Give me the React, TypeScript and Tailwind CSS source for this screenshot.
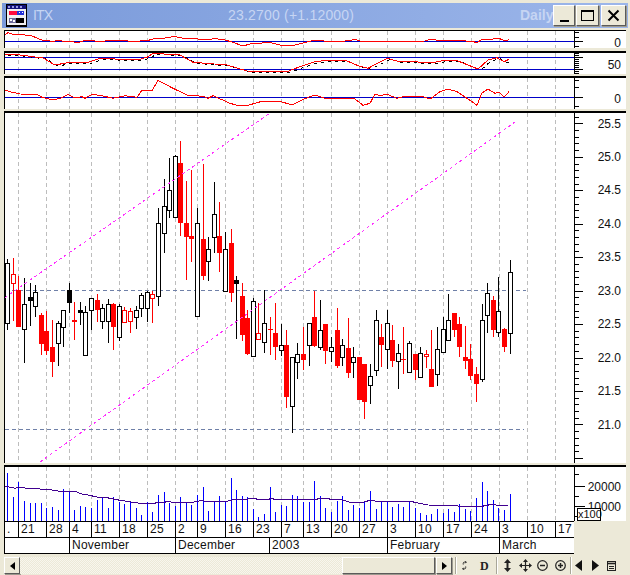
import React from "react";

type Kind = "h" | "f" | "r" | "o";
type Candle = [number, number, number, number, Kind];

const candles: Candle[] = [
  [259, 263, 323, 330, "h"], [258, 274, 283, 321, "o"], [276, 290, 327, 327, "r"], [278, 304, 329, 363, "h"],
  [283, 297, 301, 326, "f"], [285, 292, 306, 317, "h"], [313, 315, 344, 355, "r"], [311, 331, 351, 355, "r"],
  [320, 347, 362, 377, "r"], [321, 323, 343, 366, "h"], [310, 310, 327, 347, "h"], [283, 290, 303, 313, "f"],
  [302, 320, 322, 340, "r"], [302, 310, 313, 325, "f"], [306, 312, 355, 355, "h"], [298, 298, 310, 330, "h"],
  [294, 300, 310, 322, "r"], [304, 308, 321, 329, "h"], [299, 304, 321, 343, "h"], [303, 304, 327, 350, "r"],
  [304, 306, 337, 341, "h"], [307, 310, 322, 322, "o"], [308, 311, 321, 333, "o"], [306, 310, 317, 329, "h"],
  [293, 295, 308, 317, "h"], [291, 292, 308, 322, "h"], [291, 294, 298, 323, "o"], [208, 223, 296, 306, "h"],
  [179, 206, 233, 253, "h"], [158, 190, 210, 218, "h"], [155, 156, 217, 217, "h"], [141, 163, 223, 236, "r"],
  [181, 223, 237, 280, "r"], [170, 236, 239, 262, "r"], [208, 223, 316, 316, "h"], [164, 239, 276, 280, "r"],
  [237, 249, 261, 281, "h"], [182, 214, 237, 253, "h"], [202, 236, 253, 272, "r"], [232, 249, 291, 291, "h"],
  [229, 243, 293, 302, "r"], [276, 280, 284, 339, "f"], [283, 296, 335, 341, "r"], [310, 318, 354, 355, "r"],
  [298, 301, 356, 356, "h"], [303, 333, 339, 339, "o"], [290, 323, 342, 353, "h"], [317, 329, 330, 355, "r"],
  [303, 333, 347, 360, "r"], [324, 345, 350, 356, "h"], [330, 345, 397, 408, "r"], [357, 357, 406, 433, "h"],
  [343, 354, 362, 379, "h"], [327, 354, 360, 370, "r"], [323, 323, 345, 366, "h"], [291, 317, 346, 347, "r"],
  [300, 330, 347, 350, "h"], [324, 324, 351, 364, "r"], [337, 347, 351, 362, "h"], [308, 330, 366, 368, "r"],
  [339, 345, 357, 366, "h"], [318, 348, 373, 378, "r"], [347, 357, 362, 378, "h"], [357, 357, 400, 400, "r"],
  [364, 364, 402, 419, "r"], [364, 376, 385, 404, "h"], [310, 320, 370, 376, "h"], [324, 337, 345, 367, "r"],
  [310, 323, 349, 369, "h"], [325, 340, 361, 367, "r"], [344, 353, 361, 389, "h"], [327, 359, 360, 374, "r"],
  [341, 343, 372, 372, "h"], [354, 354, 370, 380, "r"], [347, 353, 377, 377, "h"], [350, 354, 356, 368, "o"],
  [330, 369, 387, 387, "r"], [327, 349, 374, 386, "h"], [317, 329, 352, 352, "h"], [294, 320, 340, 340, "h"],
  [313, 313, 330, 337, "r"], [317, 324, 347, 357, "r"], [326, 357, 361, 369, "r"], [344, 359, 376, 380, "r"],
  [367, 374, 384, 402, "r"], [304, 320, 379, 382, "h"], [283, 293, 315, 333, "h"], [296, 300, 330, 337, "r"],
  [277, 311, 332, 337, "h"], [328, 329, 347, 352, "r"], [260, 272, 333, 354, "h"],
];

const volumeTops = [
  36, 108, 62, 120, 126, 126, 126, 141, 138, 147, 84, 90, 147, 135, 138, 141, 117, 111, 141, 108,
  123, 129, 123, 141, 162, 123, 153, 102, 93, 126, 135, 108, 126, 132, 102, 78, 150, 123, 105, 120,
  51, 87, 105, 108, 144, 168, 159, 78, 153, 132, 135, 102, 105, 123, 123, 60, 105, 141, 153, 120,
  105, 147, 132, 141, 120, 90, 144, 123, 123, 138, 129, 138, 123, 141, 156, 162, 159, 144, 156, 144,
  153, 129, 144, 150, 111, 63, 90, 117, 141, 147, 99,
];

const px = (i: number) => Math.round(7.3 + 5.58 * i);
const gridXs = [18, 46, 69, 91, 119, 147, 175, 197, 225, 253, 281, 303, 331, 359, 387, 415, 443, 471, 499, 527, 555];

const toPts = (p: number[][]) => p.map((a) => a.join(",")).join(" ");

const osc1 = [[5,35],[8,32.5],[12,34],[22,34.5],[32,36],[38,38.5],[42,40],[48,40],[52,42],[58,40],[62,41],[70,41],[74,42],[80,42],[84,40.5],[92,40.5],[98,41.5],[105,41],[112,40],[122,40.5],[128,41],[140,41],[148,40.5],[156,38],[165,38],[174,36.5],[182,38],[195,38.5],[205,40],[215,38.5],[225,40],[232,42],[243,46],[250,44],[262,43],[270,42.5],[280,45],[295,45],[305,42.5],[315,40],[324,41],[335,42],[345,41],[355,39.5],[360,41],[378,41],[395,41.5],[425,41],[430,39.3],[440,40.5],[455,40.5],[472,41.3],[477,42.7],[482,39.3],[492,39.3],[498,38],[503,40],[507,41],[509,39.3]];
const stoch = [[5,54],[20,55],[43,58],[55,65],[70,62.3],[88,62.3],[100,58.3],[137,60],[147,57.3],[153,53.3],[180,55],[193,62.3],[227,65],[247,71],[287,71.7],[300,66.7],[315,61.7],[330,60],[345,60],[358,65.7],[368,68.3],[387,58.3],[397,61],[412,61.7],[432,62.7],[447,60],[458,61],[478,69],[488,60],[497,57.7],[504,61.7],[509,59.3]];
const osc3 = [[5,90],[10,91.7],[20,94],[37,94.3],[42,97.3],[53,100],[60,98.3],[68,94.7],[75,97.7],[82,96.7],[85,98.3],[92,94.3],[102,95.7],[113,98.3],[125,95.7],[137,97.3],[142,90],[152,90.7],[158,80.3],[173,88.3],[187,95],[203,96.3],[208,98.3],[213,95.7],[230,103.3],[237,105.3],[248,105.3],[262,101.3],[280,101.3],[292,105],[303,99.3],[315,95],[325,98.3],[340,98.3],[355,99],[363,105.3],[370,103.3],[375,94],[380,95.7],[387,94.3],[397,98.3],[403,96.7],[423,96.7],[430,99],[440,91.7],[448,89],[457,91.7],[472,101.7],[477,105.3],[482,93],[488,89],[495,93.3],[499,92.3],[504,97.3],[509,91.7]];
const ma = [[5,485.3],[15,487.3],[20,486.3],[27,487.3],[39,487.3],[40,488.3],[50,488.7],[62,490.7],[75,490],[80,492.7],[88,494],[97,496],[105,496.3],[120,499.3],[140,502.3],[155,502.3],[157,501.3],[165,501.3],[167,500.3],[173,501.3],[193,501.3],[200,499.7],[207,500.3],[227,500.3],[233,498.7],[248,498],[255,497.3],[258,498.7],[267,498.7],[272,497.3],[275,498.7],[315,498.7],[320,497.3],[328,497.3],[330,498.3],[340,498.3],[350,501.3],[363,501.3],[370,499.3],[380,500.7],[412,500.7],[428,504],[452,504.3],[460,505.3],[482,505.3],[492,503.3],[498,504.3],[509,504]];

function Chart({ top, height, children }: { top: number; height: number; children: React.ReactNode }) {
  return (
    <svg viewBox={`5 ${top} 569 ${height}`} className="block w-[569px] shrink-0" style={{ height }} shapeRendering="crispEdges">
      {gridXs.map((x) => (
        <line key={x} x1={x + 0.5} x2={x + 0.5} y1={top} y2={top + height} stroke="#bdbdbd" strokeDasharray="4 3" />
      ))}
      {children}
    </svg>
  );
}

function Axis({ top, height, majors, minors, labels, majorLen = 8 }: { top: number; height: number; majors: number[]; minors: number[]; labels: [string, number][]; majorLen?: number }) {
  return (
    <svg viewBox={`574 ${top} 52 ${height}`} className="block w-[52px] shrink-0" style={{ height }} fontFamily="'Liberation Sans', Arial, sans-serif" fontSize={12}>
      <line x1={574.5} x2={574.5} y1={top} y2={top + height} stroke="#000" shapeRendering="crispEdges" />
      {majors.map((y) => (
        <line key={y} x1={575} x2={575 + majorLen} y1={Math.round(y) + 0.5} y2={Math.round(y) + 0.5} stroke="#000" shapeRendering="crispEdges" />
      ))}
      {minors.map((y) => (
        <line key={y} x1={575} x2={579} y1={Math.round(y) + 0.5} y2={Math.round(y) + 0.5} stroke="#000" shapeRendering="crispEdges" />
      ))}
      {labels.map(([t, y]) => (
        <text key={t} x={621} y={y + 4.5} textAnchor="end" fill="#111">{t}</text>
      ))}
    </svg>
  );
}

function Hline({ y }: { y: number }) {
  return <line x1={5} x2={574} y1={y} y2={y} stroke="#0000c8" />;
}

function Btn({ children, className = "" }: { children: React.ReactNode; className?: string }) {
  return (
    <div className={`flex items-center justify-center bg-[#ece9d8] border border-t-white border-l-white border-r-[#5a5a5a] border-b-[#5a5a5a] shadow-[1px_1px_0_#9c9a8e] ${className}`}>
      {children}
    </div>
  );
}

function Panel({ className = "", children }: { className?: string; children: React.ReactNode }) {
  return <div className={`ml-1 w-[622px] flex bg-white border-l border-l-black border-t-2 border-t-black ${className}`}>{children}</div>;
}

const row1 = [
  [5, "."], [18, "21"], [46, "28"], [69, "4"], [91, "11"], [119, "18"], [147, "25"], [175, "2"], [197, "9"], [225, "16"], [253, "23"], [281, "7"], [303, "13"], [331, "20"], [359, "27"], [387, "3"], [415, "10"], [443, "17"], [471, "24"], [499, "3"], [527, "10"], [555, "17"],
] as [number, string][];
const row2 = [[5, ""], [69, "November"], [175, "December"], [269, "2003"], [387, "February"], [499, "March"]] as [number, string][];

function DateRow({ items }: { items: [number, string][] }) {
  return (
    <div className="flex h-4 border-b border-b-black">
      {items.map(([x, t], i) => {
        const next = i + 1 < items.length ? items[i + 1][0] : 574;
        return (
          <div key={x} className={`overflow-hidden whitespace-nowrap pl-[2px] text-[12px] leading-[15px] tracking-[0.25px] text-[#111] ${i > 0 ? "border-l border-l-black" : ""}`} style={{ width: next - x }}>
            {t}
          </div>
        );
      })}
    </div>
  );
}

function Sep() {
  return <div className="w-[2px] h-[17px] border-l border-l-[#a8a698] border-r border-r-white" />;
}

const WinIcon = () => (
  <svg viewBox="0 0 23 23" className="w-[23px] h-[23px] shrink-0" shapeRendering="crispEdges">
    <rect x="1" y="0" width="21" height="23" fill="#000" />
    <rect x="2" y="1" width="19" height="4" fill="#14147a" />
    <rect x="3" y="2" width="2" height="2" fill="#9a9ae0" />
    <rect x="7" y="2" width="2" height="2" fill="#9a9ae0" />
    <rect x="11" y="2" width="2" height="2" fill="#9a9ae0" />
    <rect x="15" y="2" width="2" height="2" fill="#9a9ae0" />
    <rect x="2" y="5" width="19" height="16" fill="#f0f0f0" />
    <rect x="4" y="7" width="8" height="4" fill="#ff0a3c" />
    <rect x="12" y="7" width="7" height="4" fill="#2030d8" />
    <rect x="14" y="8" width="1" height="1" fill="#fff" />
    <rect x="17" y="8" width="1" height="1" fill="#fff" />
    <rect x="4" y="14" width="7" height="5" fill="#6a6a9a" />
    <rect x="5" y="15" width="2" height="2" fill="#fff" />
    <rect x="8" y="16" width="2" height="2" fill="#fff" />
    <rect x="11" y="14" width="8" height="5" fill="#000" />
  </svg>
);

const ToolIcon = ({ children, w = 13 }: { children: React.ReactNode; w?: number }) => (
  <svg viewBox="0 0 13 13" className="shrink-0" style={{ width: w, height: 13 }} fill="none" stroke="#222" strokeWidth="1.2">
    {children}
  </svg>
);

export default function App() {
  const majors = Array.from({ length: 11 }, (_, k) => 123.4 + 33.45 * k);
  const minors = Array.from({ length: 51 }, (_, k) => 123.4 + 6.69 * k - 6.69).filter((y, k) => (k - 1) % 5 !== 0 && y > 113);
  const labels = ["25.5", "25.0", "24.5", "24.0", "23.5", "23.0", "22.5", "22.0", "21.5", "21.0"].map((t, k) => [t, 123 + 33.45 * k] as [string, number]);
  return (
    <div className="relative w-[630px] h-[575px] bg-[#ece9d8] overflow-hidden font-['Liberation_Sans',Arial,sans-serif] pt-[3px]">
      {/* title bar */}
      <div className="mx-[2px] h-[25px] flex items-center pl-[3px] pr-[2px] bg-gradient-to-r from-[#7a9ada] to-[#9cb6ea] text-[#c6d5f3]">
        <WinIcon />
        <span className="ml-[5px] w-[195px] text-[14px] tracking-[-0.8px]">ITX</span>
        <span className="w-[292px] text-[14px] tracking-[0.2px]">23.2700 (+1.12000)</span>
        <span className="text-[14px] font-semibold w-[33px]">Daily</span>
        <Btn className="w-[22px] h-[21px] ml-[0px]">
          <div className="w-[9px] h-[2px] bg-black mt-[10px]" />
        </Btn>
        <Btn className="w-[23px] h-[21px] ml-[1px]">
          <div className="w-[13px] h-[11px] border border-black border-t-2" />
        </Btn>
        <Btn className="w-[25px] h-[21px] ml-[2px]">
          <svg viewBox="0 0 13 13" className="w-[13px] h-[13px]"><path d="M1.5 1.5 L11.5 11.5 M11.5 1.5 L1.5 11.5" stroke="#000" strokeWidth="2" /></svg>
        </Btn>
      </div>

      {/* oscillator 1 */}
      <Panel className="mt-[2px] h-[18px] !border-t">
        <Chart top={31} height={17}>
          <Hline y={41.5} />
          <polyline points={toPts(osc1)} fill="none" stroke="#ff0000" />
        </Chart>
        <Axis top={31} height={17} majors={[41]} minors={[32, 37, 46]} labels={[["0", 42]]} />
      </Panel>

      {/* oscillator 2 */}
      <Panel className="mt-[3px] h-[23px]">
        <Chart top={53} height={21}>
          <Hline y={57.5} />
          <Hline y={69.5} />
          <polyline points={toPts(stoch.map(([x, y]) => [x + 3, y + 1]))} fill="none" stroke="#000" strokeDasharray="3 4" />
          <polyline points={toPts(stoch)} fill="none" stroke="#ff0000" />
        </Chart>
        <Axis top={53} height={21} majors={[57, 69]} minors={[53, 55, 59, 61, 63, 65, 67, 71, 73]} labels={[["50", 64.5]]} />
      </Panel>

      {/* oscillator 3 */}
      <Panel className="mt-[2px] h-[33px]">
        <Chart top={78} height={31}>
          <Hline y={97.5} />
          <polyline points={toPts(osc3)} fill="none" stroke="#ff0000" />
        </Chart>
        <Axis top={78} height={31} majors={[97]} minors={[80, 87, 106]} labels={[["0", 98]]} />
      </Panel>

      {/* price chart */}
      <Panel className="mt-[2px] h-[352px]">
        <Chart top={113} height={350}>
          <line x1={5} x2={526} y1={290.5} y2={290.5} stroke="#6f80a8" strokeDasharray="4 3" />
          <line x1={5} x2={524} y1={429.5} y2={429.5} stroke="#6f80a8" strokeDasharray="4 3" />
          {candles.map(([wt, bt, bb, wb, k], i) => {
            const x = px(i);
            const color = k === "r" || k === "o" ? "#ff0000" : "#000000";
            const hollow = k === "h" || k === "o";
            return (
              <g key={i}>
                <line x1={x + 0.5} x2={x + 0.5} y1={wt} y2={wb} stroke={color} />
                {hollow ? (
                  <rect x={x - 1.5} y={bt + 0.5} width={4} height={bb - bt} fill="#fff" stroke={color} />
                ) : (
                  <rect x={x - 2} y={bt} width={5} height={bb - bt} fill={color} />
                )}
              </g>
            );
          })}
          <line x1={5} y1={297.5} x2={270} y2={113} stroke="#ff30ff" strokeDasharray="3 3" />
          <line x1={40} y1={462} x2={515} y2={122} stroke="#ff30ff" strokeDasharray="3 3" />
        </Chart>
        <Axis top={113} height={350} majors={majors} minors={minors} labels={labels} />
      </Panel>

      {/* volume */}
      <Panel className="relative mt-[2px] h-[56px] !w-[622px]">
        <Chart top={466} height={54}>
          {volumeTops.map((t, i) => {
            const x = px(i) + 0.5;
            return <line key={i} x1={x} x2={x} y1={460 + t / 3} y2={520} stroke="#0000ff" />;
          })}
          <polyline points={toPts(ma)} fill="none" stroke="#400090" />
        </Chart>
        <Axis top={466} height={54} majors={[485, 505]} minors={[473, 495, 515]} majorLen={10} labels={[["20000", 485], ["10000", 505]]} />
        <div className="absolute left-[572px] bottom-0 w-[24px] h-[13px] bg-white border border-black text-[11px] leading-[11px] text-center text-[#111]">x100</div>
      </Panel>

      {/* dates */}
      <div className="ml-1 w-[570px] bg-white border-l border-l-black border-t border-t-black">
        <DateRow items={row1} />
        <DateRow items={row2} />
      </div>

      {/* toolbar */}
      <div className="ml-1 mt-[2px] h-[19px] flex items-center">
        <Btn className="w-[16px] h-[17px]">
          <svg viewBox="0 0 5 8" className="w-[5px] h-[8px]"><path d="M5 0 L0 4 L5 8Z" fill="#000" /></svg>
        </Btn>
        <div className="w-[322px] h-[17px] bg-[repeating-conic-gradient(#f8f6ee_0_25%,#ece9d8_0_50%)] bg-[length:2px_2px]" />
        <Btn className="w-[93px] h-[17px]"><span /></Btn>
        <Btn className="w-[16px] h-[17px] ml-[1px]">
          <svg viewBox="0 0 5 8" className="w-[5px] h-[8px]"><path d="M0 0 L5 4 L0 8Z" fill="#000" /></svg>
        </Btn>
        <div className="ml-[3px]"><Sep /></div>
        <div className="w-[39px] flex items-center pl-[5px] gap-[10px]">
          <ToolIcon w={8}>
            <path d="M2 5 V3 Q2 1 4 1 H7 M5 0 L7 1 L5 3 M6 8 V10 Q6 12 4 12 H1 M3 10 L1 12 L3 13" strokeWidth="1.5" />
          </ToolIcon>
          <span className="font-['Liberation_Serif',serif] font-bold text-[12px] leading-none text-[#222]">D</span>
        </div>
        <Sep />
        <div className="w-[72px] flex items-center pl-[3px] gap-[4.5px]">
          <ToolIcon>
            <path d="M6.5 3 V10" strokeWidth="2" />
            <path d="M6.5 0 L10 4 H3Z M6.5 13 L3 9 H10Z" fill="#222" stroke="none" />
          </ToolIcon>
          <ToolIcon>
            <path d="M6.5 1 V12 M1 6.5 H12" />
            <path d="M6.5 0 L9 3 H4Z M6.5 13 L4 10 H9Z M0 6.5 L3 4 V9Z M13 6.5 L10 4 V9Z" fill="#222" stroke="none" />
          </ToolIcon>
          <ToolIcon>
            <circle cx="6.5" cy="6.5" r="4.8" />
            <path d="M4 6.5 H9" strokeWidth="1.5" />
          </ToolIcon>
          <ToolIcon>
            <circle cx="6.5" cy="6.5" r="4.8" />
            <path d="M4 6.5 H9 M6.5 4 V9" strokeWidth="1.5" />
          </ToolIcon>
        </div>
        <Sep />
        <div className="flex items-center pl-[3px] gap-[10px]">
          <svg viewBox="0 0 7 11" className="w-[7px] h-[11px]"><path d="M7 0 L0 5.5 L7 11Z" fill="#111" /></svg>
          <svg viewBox="0 0 7 11" className="w-[7px] h-[11px]"><path d="M0 0 L7 5.5 L0 11Z" fill="#111" /></svg>
          <svg viewBox="0 0 11 12" className="w-[11px] h-[12px] -ml-[3px]" fill="none" stroke="#222"><rect x="1.5" y="1.5" width="8" height="9" /><path d="M1.5 3.5 H9.5" strokeWidth="1.6" /><path d="M3 6.5 H8 M3 8.5 H8" /></svg>
        </div>
      </div>
    </div>
  );
}
